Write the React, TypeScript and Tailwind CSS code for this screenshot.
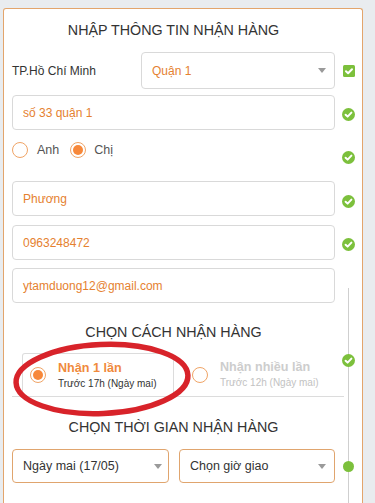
import React from 'react';

const ORANGE = 'text-[#e5812f]';

function Check() {
  return (
    <svg width="13" height="13" viewBox="0 0 13 13">
      <circle cx="6.5" cy="6.5" r="6.5" fill="#7cc03c" />
      <path d="M3.6 6.7 L5.6 8.6 L9.4 4.6" stroke="#fff" strokeWidth="2" fill="none" strokeLinecap="round" strokeLinejoin="round" />
    </svg>
  );
}

function CheckBox() {
  return (
    <svg width="12" height="12" viewBox="0 0 12 12">
      <rect x="0" y="0" width="12" height="12" rx="1.5" fill="#7cc03c" />
      <path d="M3 6.2 L5.1 8.2 L9 4.2" stroke="#fff" strokeWidth="2" fill="none" strokeLinecap="round" strokeLinejoin="round" />
    </svg>
  );
}

function Caret() {
  return (
    <svg width="8" height="5" viewBox="0 0 8 5">
      <path d="M0 0 L8 0 L4 5 Z" fill="#9a9a9a" />
    </svg>
  );
}

function Radio({ checked }: { checked?: boolean }) {
  return (
    <span className="w-[16px] h-[16px] rounded-full border border-[#f0a466] bg-white flex items-center justify-center shrink-0">
      {checked && <span className="w-[10px] h-[10px] rounded-full bg-[#f7883a]" />}
    </span>
  );
}

function Row({
  children,
  indicator,
  offset = '',
  className = '',
}: {
  children: React.ReactNode;
  indicator?: React.ReactNode;
  offset?: string;
  className?: string;
}) {
  return (
    <div className={`flex items-center ${className}`}>
      <div className="w-[323px] shrink-0">{children}</div>
      <div className={`flex-1 flex justify-center relative z-10 ${offset}`}>{indicator}</div>
    </div>
  );
}

function Input({ value }: { value: string }) {
  return (
    <div className={`h-[35px] border border-[#d9d9d9] rounded-[4px] flex items-center px-[10px] text-[12px] ${ORANGE}`}>
      {value}
    </div>
  );
}

function Title({ text, className = '' }: { text: string; className?: string }) {
  return (
    <div className={`w-[323px] text-center text-[14.3px] leading-[20px] text-[#333] ${className}`}>{text}</div>
  );
}

export default function App() {
  return (
    <div
      className="h-[503px] overflow-hidden bg-[#e9ecef] pt-[8px] pl-[3px]"
      style={{ fontFamily: '"Liberation Sans", Arial, sans-serif' }}
    >
      <div className="relative w-[360px] h-[520px] bg-white border border-b-0 border-[#e3a56c] rounded-t-[3px] pl-[8px]">
        {/* timeline line */}
        <div className="absolute left-[344px] top-[279px] bottom-0 w-px bg-[#cfcfcf]" />

        <Title text="NHẬP THÔNG TIN NHẬN HÀNG" className="pt-[11px] h-[43px] box-border" />

        <Row indicator={<CheckBox />} offset="mt-[1px]">
          <div className="flex items-center h-[37px]">
            <div className="w-[129px] text-[12px] text-[#333]">TP.Hồ Chí Minh</div>
            <div className={`flex-1 h-[37px] border border-[#d9d9d9] rounded-[4px] flex items-center justify-between pl-[10px] pr-[8px] text-[12px] ${ORANGE}`}>
              <span>Quận 1</span>
              <Caret />
            </div>
          </div>
        </Row>

        <Row indicator={<Check />} className="mt-[6px]" offset="mt-[4px]">
          <Input value="số 33 quận 1" />
        </Row>

        <Row indicator={<Check />} className="mt-[5px]" offset="mt-[14px]">
          <div className="flex items-center h-[30px] text-[12.5px] text-[#555]">
            <Radio />
            <span className="ml-[9px]">Anh</span>
            <span className="ml-[11px]">
              <Radio checked />
            </span>
            <span className="ml-[8px]">Chị</span>
          </div>
        </Row>

        <Row indicator={<Check />} className="mt-[16px]" offset="mt-[6px]">
          <Input value="Phương" />
        </Row>

        <Row indicator={<Check />} className="mt-[9px]" offset="mt-[4px]">
          <Input value="0963248472" />
        </Row>

        <Row className="mt-[8px]">
          <Input value="ytamduong12@gmail.com" />
        </Row>

        <Title text="CHỌN CÁCH NHẬN HÀNG" className="mt-[19px]" />

        <Row indicator={<Check />} className="mt-[11px]" offset="-mt-[29px]">
          <div className="w-[332px] h-[44px] border-b border-[#dcdcdc] flex">
            <div className="ml-[10px] w-[152px] h-[43px] border border-b-0 border-[#dcdcdc] rounded-t-[3px] flex items-center pl-[7px]">
              <Radio checked />
              <div className="ml-[12px] flex flex-col">
                <span className="text-[12.6px] font-bold text-[#f08a3c] leading-[16px]">Nhận 1 lần</span>
                <span className="text-[10px] text-[#333] leading-[14px] mt-[1px]">Trước 17h (Ngày mai)</span>
              </div>
            </div>
            <div className="flex items-center pl-[18px] h-[43px]">
              <Radio />
              <div className="ml-[12px] flex flex-col">
                <span className="text-[12.6px] font-bold text-[#cdcdcd] leading-[16px]">Nhận nhiều lần</span>
                <span className="text-[10px] text-[#c2c2c2] leading-[14px] mt-[1px]">Trước 12h (Ngày mai)</span>
              </div>
            </div>
          </div>
        </Row>

        <Title text="CHỌN THỜI GIAN NHẬN HÀNG" className="mt-[20px]" />

        <Row
          indicator={<span className="w-[11px] h-[11px] rounded-full bg-[#7cc03c] block" />}
          className="mt-[12px]"
        >
          <div className="flex gap-[10px]">
            <div className="w-[157px] h-[34px] border border-[#e0a56e] rounded-[4px] flex items-center justify-between pl-[10px] pr-[6px] text-[12.5px] text-[#333]">
              <span>Ngày mai (17/05)</span>
              <Caret />
            </div>
            <div className="w-[156px] h-[34px] border border-[#e0a56e] rounded-[4px] flex items-center justify-between pl-[10px] pr-[8px] text-[12.5px] text-[#333]">
              <span>Chọn giờ giao</span>
              <Caret />
            </div>
          </div>
        </Row>

        {/* red annotation ellipse */}
        <svg className="absolute left-0 top-[330px] pointer-events-none" width="200" height="90" viewBox="0 0 200 90">
          <ellipse cx="98" cy="40" rx="86" ry="34.5" fill="none" stroke="#d8232a" strokeWidth="5.5" transform="rotate(-2.5 98 40)" />
        </svg>
      </div>
    </div>
  );
}
